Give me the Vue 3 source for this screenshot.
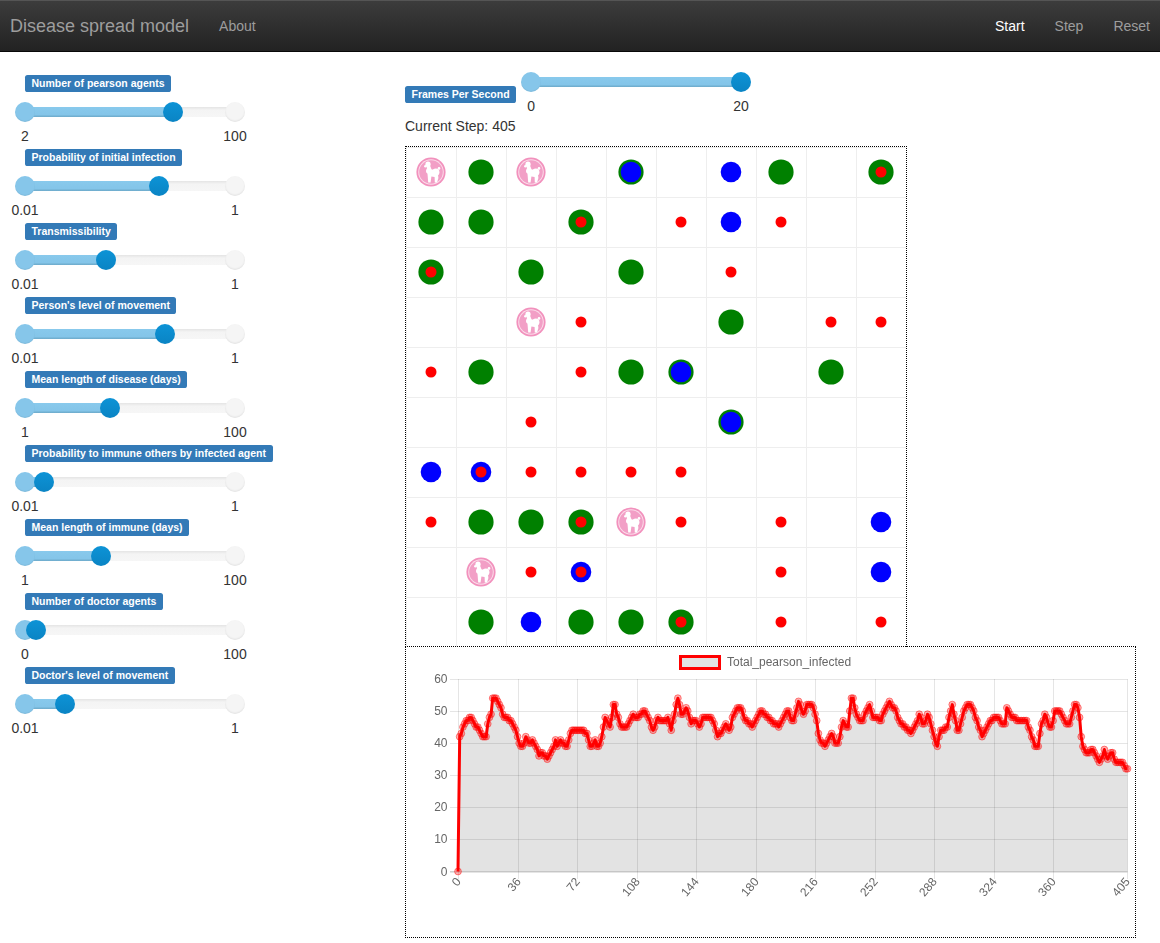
<template>
  <div class="page">
    <nav class="navbar">
      <span class="brand">Disease spread model</span>
      <a class="nav-link about">About</a>
      <div class="nav-right">
        <a class="nav-link active">Start</a>
        <a class="nav-link">Step</a>
        <a class="nav-link">Reset</a>
      </div>
    </nav>

    <div class="content">
      <aside class="sidebar">
        <div v-for="s in sliders" :key="s.label" class="slider-block">
          <span class="badge">{{ s.label }}</span>
          <div class="slider">
            <div class="track">
              <div class="bar" :style="{ width: s.pos + 'px' }"></div>
              <div class="handle from"></div>
              <div class="handle to" :style="{ left: s.pos + 'px' }"></div>
              <div class="handle max"></div>
            </div>
          </div>
          <div class="scale">
            <span>{{ s.min }}</span>
            <span>{{ s.max }}</span>
          </div>
        </div>
      </aside>

      <main class="main">
        <div class="fps-row">
          <span class="badge">Frames Per Second</span>
          <div class="fps-slider">
            <div class="slider">
              <div class="track">
                <div class="bar" style="width: 210px"></div>
                <div class="handle from"></div>
                <div class="handle to" style="left: 210px"></div>
              </div>
            </div>
            <div class="scale">
              <span>0</span>
              <span>20</span>
            </div>
          </div>
        </div>
        <div class="step-text">Current Step: 405</div>

        <div class="grid">
          <div v-for="(cell, i) in cells" :key="i" class="cell">
            <svg v-if="cell.length" viewBox="0 0 50 50" width="50" height="50">
              <template v-for="(a, j) in cell" :key="j">
                <g v-if="a === 'd'" transform="translate(10 10)">
                  <circle cx="15" cy="15" r="14.6" fill="#f291bd" />
                  <circle cx="15" cy="15" r="12.8" fill="#fbdce9" />
                  <circle cx="15" cy="15" r="11.8" fill="#f29fc6" />
                  <g fill="#fff">
                    <circle cx="12" cy="7.2" r="2.6" />
                    <circle cx="9.4" cy="9.2" r="1.3" />
                    <path d="M10.6 9 L14 8.6 L15.6 12.4 L21.4 13 L22.4 21 L21 25.4 L18.8 25.4 L18.6 20 L15.4 19.4 L14.6 25.4 L12.2 25.4 L11.6 18 Z" />
                    <circle cx="19.8" cy="15.2" r="3.6" />
                    <circle cx="23" cy="11.4" r="1.3" />
                    <circle cx="12.8" cy="14" r="2.8" />
                  </g>
                </g>
                <circle v-else cx="25" cy="25" :r="dots[a].r" :fill="dots[a].fill" />
              </template>
            </svg>
          </div>
        </div>

        <div class="chart">
          <svg width="729" height="290" viewBox="406 647 729 290">
            <path :d="areaPath" fill="rgba(0,0,0,0.11)" />
            <g stroke="rgba(0,0,0,0.1)" stroke-width="1">
              <line v-for="t in yTicks" :key="t.label" x1="450" :x2="plotRight" :y1="t.y" :y2="t.y" />
              <line v-for="t in xTicks" :key="t.label" :x1="t.x" :x2="t.x" y1="679" y2="879" />
              <line :x1="plotRight" :x2="plotRight" y1="679" y2="879" />
            </g>
            <line x1="450" :x2="plotRight" :y1="baseY" :y2="baseY" stroke="rgba(0,0,0,0.18)" />
            <path :d="linePath" fill="none" stroke="#f00" stroke-width="3" stroke-linejoin="round" />
            <circle
              v-for="(p, i) in points"
              :key="i"
              :cx="p.x"
              :cy="p.y"
              r="3.4"
              fill="rgba(255,0,0,0.3)"
              stroke="rgba(255,0,0,0.45)"
            />

            <rect x="680.5" y="656.5" width="39" height="12" fill="#e2e2e2" stroke="#f00" stroke-width="3" />
            <text x="727" y="666" class="chart-text">Total_pearson_infected</text>

            <text v-for="t in yTicks" :key="t.label" x="447.5" :y="t.y + 3" text-anchor="end" class="chart-text">{{ t.label }}</text>
            <text
              v-for="t in xLabels"
              :key="t.label"
              text-anchor="end"
              class="chart-text"
              :transform="`translate(${t.x + 3} 882) rotate(-50)`"
            >{{ t.label }}</text>
          </svg>
        </div>
      </main>
    </div>
  </div>
</template>

<script setup>
const sliders = [
  { label: 'Number of pearson agents', min: 2, max: 100, handle: 173 },
  { label: 'Probability of initial infection', min: 0.01, max: 1, handle: 159 },
  { label: 'Transmissibility', min: 0.01, max: 1, handle: 106 },
  { label: "Person's level of movement", min: 0.01, max: 1, handle: 165 },
  { label: 'Mean length of disease (days)', min: 1, max: 100, handle: 110 },
  { label: 'Probability to immune others by infected agent', min: 0.01, max: 1, handle: 44 },
  { label: 'Mean length of immune (days)', min: 1, max: 100, handle: 101 },
  { label: 'Number of doctor agents', min: 0, max: 100, handle: 36 },
  { label: "Doctor's level of movement", min: 0.01, max: 1, handle: 65 },
].map((s) => ({ ...s, pos: s.handle - 25 }))

const dots = {
  g: { r: 12.6, fill: '#008000' },
  b: { r: 10.3, fill: '#00f' },
  r: { r: 5.5, fill: '#f00' },
}

// g = green, b = blue, r = red, d = doctor, combos are stacked
const rows = [
  'd g d . gb . b g . gr',
  'g g . gr . r b r . .',
  'gr . g . g . r . . .',
  '. . d r . . g . r r',
  'r g . r g gb . . g .',
  '. . r . . . gb . . .',
  'b br r r r r . . . .',
  'r g g gr d r . r . b',
  '. d r br . . . r . b',
  '. g b g g gr . r . r',
]
const cells = rows.flatMap((r) => r.split(' ').map((c) => (c === '.' ? [] : c.split(''))))

// chart trace, read off as pixel x / y
const trace = [
  [459.6,736],[461,735],[463,727],[466,721],[468,719],[470,717],[472,718],[474,722],[476,726],[479,727],
  [481,735],[485,736],[487,735],[488,722],[491,714],[493,697],[497,700],[500,705],[503,717],[508,718],
  [513,723],[517,735],[520,747],[523,747],[526,737],[530,743],[533,740],[537,748],[538,755],[542,753],
  [548,759],[553,747],[556,740],[558,748],[560,740],[565,745],[568,745],[570,733],[575,729],[583,729],
  [587,735],[591,748],[595,740],[598,748],[602,737],[605,718],[610,727],[614,702],[618,718],[622,728],
  [627,727],[632,715],[638,717],[645,710],[653,730],[658,718],[662,723],[668,718],[671,730],[673,720],
  [678,697],[682,717],[687,707],[691,723],[695,720],[700,727],[703,717],[712,718],[718,737],[726,723],
  [730,733],[733,715],[738,707],[742,710],[745,720],[753,727],[760,710],[768,718],[779,727],[788,710],
  [793,723],[799,701],[804,717],[807,703],[814,707],[817,723],[819,739],[825,745],[832,732],[835,743],
  [838,743],[843,722],[848,727],[852,694],[857,717],[862,723],[869,704],[873,717],[881,720],[889,701],
  [895,710],[900,722],[912,733],[920,713],[923,727],[928,713],[937,747],[940,730],[947,728],[952,704],
  [958,734],[965,707],[970,703],[977,720],[982,737],[990,720],[998,717],[1005,727],[1006,707],[1012,718],
  [1027,722],[1032,737],[1035,747],[1039,747],[1040,730],[1045,713],[1051,731],[1055,710],[1060,710],
  [1065,723],[1070,723],[1075,703],[1079,710],[1082,745],[1087,755],[1092,748],[1100,762],[1105,748],
  [1107,762],[1112,752],[1116,762],[1122,762],[1127,769],
]

const plotLeft = 458
const plotRight = 1127.5
const baseY = 871.5
const unit = 3.21
const stepW = (plotRight - plotLeft) / 405

const yAt = (x) => {
  const k = trace.findIndex((p) => p[0] >= x)
  if (k < 0) return trace[trace.length - 1][1]
  if (k === 0) return trace[0][1]
  const [x0, y0] = trace[k - 1]
  const [x1, y1] = trace[k]
  return y0 + ((y1 - y0) * (x - x0)) / (x1 - x0)
}

const points = [{ x: plotLeft, y: baseY }]
for (let i = 1; i <= 405; i++) {
  const x = plotLeft + i * stepW
  const val = Math.round((baseY - yAt(x)) / unit)
  points.push({ x, y: baseY - val * unit })
}

const linePath = points.map((p, i) => `${i ? 'L' : 'M'}${p.x.toFixed(1)} ${p.y.toFixed(1)}`).join(' ')
const areaPath = `${linePath} L${plotRight} ${baseY} L${plotLeft} ${baseY} Z`

const yTicks = [60, 50, 40, 30, 20, 10, 0].map((v) => ({
  label: v,
  y: Math.round(baseY - v * unit) + 0.5,
}))
const xTicks = [0, 36, 72, 108, 144, 180, 216, 252, 288, 324, 360].map((v) => ({
  label: v,
  x: Math.round(plotLeft + v * stepW) + 0.5,
}))
const xLabels = [...xTicks, { label: 405, x: plotRight }]
</script>

<style>
html,
body {
  background: #fff;
}
</style>

<style scoped>
.page {
  font-family: "Liberation Sans", Arial, sans-serif;
  font-size: 14px;
  color: #333;
  height: 943px;
  overflow: hidden;
}

.navbar {
  height: 50px;
  display: flex;
  align-items: center;
  padding: 0 10px;
  background: linear-gradient(to bottom, #3c3c3c, #222);
  border-top: 1px solid #555;
  border-bottom: 1px solid #080808;
}

.brand {
  font-size: 18px;
  color: #9d9d9d;
}

.nav-link {
  color: #9d9d9d;
}

.about {
  margin-left: 30px;
}

.nav-right {
  margin-left: auto;
  display: flex;
  gap: 30px;
}

.active {
  color: #fff;
}

.content {
  display: flex;
}

.sidebar {
  width: 405px;
  flex: none;
  padding-top: 23px;
  box-sizing: border-box;
}

.slider-block {
  height: 74px;
  width: 260px;
}

.badge {
  display: inline-block;
  background: #337ab7;
  color: #fff;
  font-size: 10.5px;
  font-weight: 700;
  line-height: 11px;
  padding: 3px 6.5px 3px;
  border-radius: 2.6px;
  white-space: nowrap;
}

.slider-block .badge {
  margin-left: 25px;
  vertical-align: top;
}

.slider {
  padding: 15px 15px 0;
  width: 230px;
}

.track {
  position: relative;
  height: 10px;
  border-radius: 5px;
  background: linear-gradient(to bottom, #e4e4e4, #f4f4f4 30%, #f6f6f6);
  width: 210px;
  margin-left: 10px;
}

.bar {
  position: absolute;
  left: 0;
  top: 0;
  height: 10px;
  background: linear-gradient(to bottom, #88c9ec, #84c5e9 75%, #6ca9c9);
}

.handle {
  position: absolute;
  top: -5px;
  width: 20px;
  height: 20px;
  margin-left: -10px;
  border-radius: 50%;
}

.from {
  left: 0;
  background: #86c6ea;
  box-shadow: inset 0 -1px 1px rgba(0, 0, 0, 0.06);
}

.to {
  background: linear-gradient(to bottom, #0d93d6, #0a84c4);
}

.max {
  left: 210px;
  background: #f5f5f5;
  box-shadow: inset 0 -1px 2px rgba(0, 0, 0, 0.08);
}

.scale {
  display: flex;
  justify-content: space-between;
  width: 260px;
  margin-top: 9px;
  line-height: 20px;
}

.scale span {
  width: 50px;
  text-align: center;
}

.main {
  flex: none;
  width: 731px;
}

.fps-row {
  display: flex;
  align-items: flex-start;
  height: 61px;
}

.fps-row .badge {
  margin-top: 34px;
}

.fps-slider {
  margin-left: -10px;
  width: 260px;
}

.fps-slider .slider {
  padding-top: 25px;
}

.fps-slider .scale {
  margin-top: 9px;
}

.step-text {
  line-height: 20px;
  margin-top: 3px;
  height: 30px;
}

.grid {
  width: 500px;
  display: grid;
  grid-template-columns: repeat(10, 50px);
  grid-auto-rows: 50px;
  border: 1px dotted #000;
  border-bottom: 0;
}

.cell {
  box-shadow: inset 1px 1px 0 #eee;
}

.cell svg {
  display: block;
}

.chart {
  width: 729px;
  height: 290px;
  margin-top: -1px;
  border: 1px dotted #000;
  position: relative;
}

.chart svg {
  display: block;
  filter: blur(0.35px);
}

.chart-text {
  font-family: "Liberation Sans", Arial, sans-serif;
  font-size: 12px;
  fill: #666;
}
</style>
